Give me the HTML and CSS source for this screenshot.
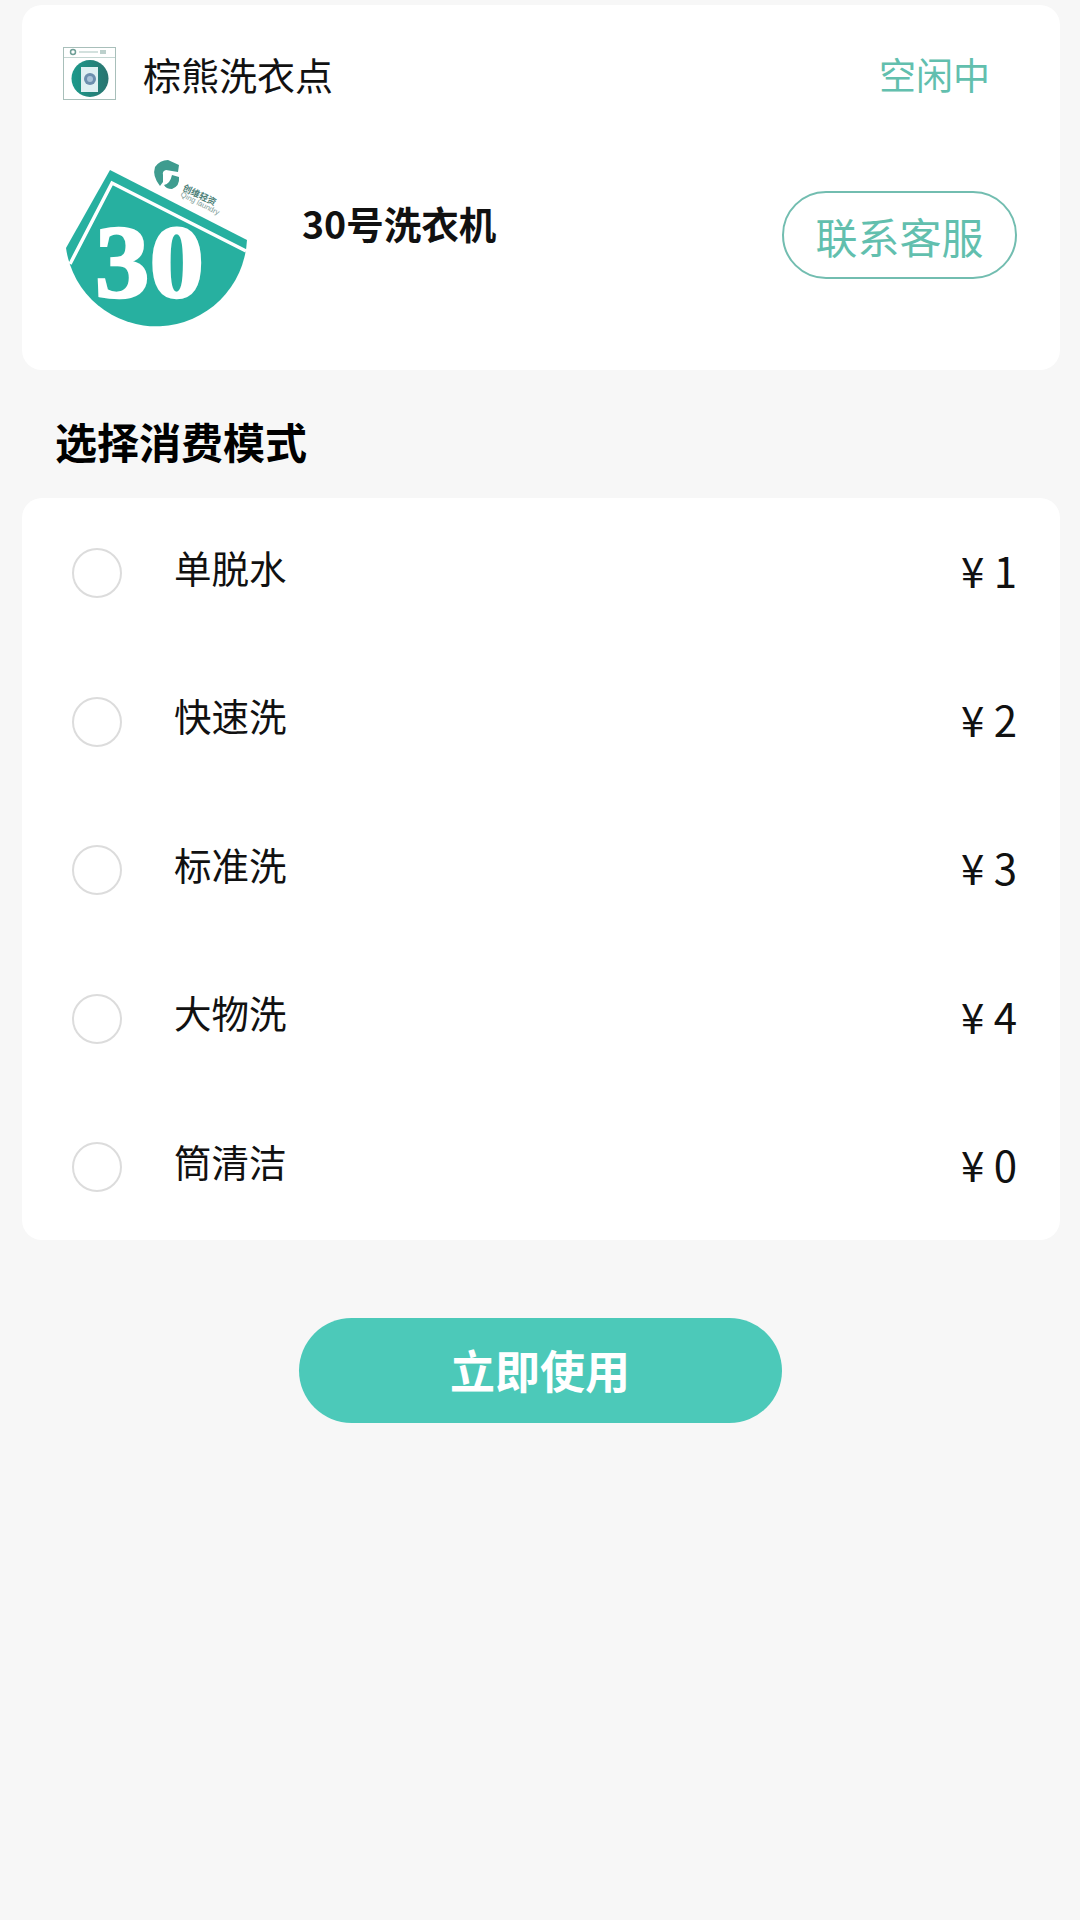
FILE: index.html
```html
<!DOCTYPE html>
<html lang="zh-CN">
<head>
    <meta charset="UTF-8">
    <meta name="viewport" content="width=device-width, initial-scale=1.0">
    <title>选择消费模式</title>
    <link rel="stylesheet" href="styles.css">
</head>
<body>
    <section class="card machine-card">
        <div class="shop-row">
            <svg class="shop-logo" viewBox="0 0 53 53">
                <defs>
                    <linearGradient id="shopDisc" x1="0" y1="0" x2="1" y2="0">
                        <stop offset="0" stop-color="#1c9a8b"/>
                        <stop offset="1" stop-color="#2a7470"/>
                    </linearGradient>
                </defs>
                <rect x="0.5" y="0.5" width="52" height="52" fill="#fff" stroke="#a8bfba"/>
                <line x1="1" y1="10.5" x2="52" y2="10.5" stroke="#c4d6d2"/>
                <circle cx="10" cy="5" r="2.5" fill="none" stroke="#6f9f97" stroke-width="1.5"/>
                <rect x="16" y="4" width="19" height="2" fill="#d3e1de"/>
                <rect x="37" y="3" width="6" height="4" fill="#bcd0cc"/>
                <circle cx="27" cy="31.5" r="18.5" fill="url(#shopDisc)"/>
                <rect x="18" y="20" width="17" height="25" fill="#dff0f2"/>
                <circle cx="27" cy="32" r="6" fill="#6d8fae"/>
                <circle cx="27" cy="32" r="3" fill="#a9c3d8"/>
            </svg>
            <span class="shop-name">棕熊洗衣点</span>
            <span class="shop-status">空闲中</span>
        </div>
        <div class="machine-row">
            <svg class="machine-badge" viewBox="0 0 200 175">
                <!-- folded tag: straight top edges, round bottom -->
                <path class="badge-fill" d="M50 10 L187 80 A91 91 0 0 1 6 88 Z"/>
                <path class="badge-line" d="M10 104 L52 23 L186 91"/>
                <text class="badge-number" x="35" y="137" textLength="109" lengthAdjust="spacingAndGlyphs">30</text>
                <path class="badge-mark" d="M95 7 Q100 0 108 0 L119 5 L118 12 L106 10 Q102 11 103 15 L103 22 L100 26 Q92 16 95 7 Z"/>
                <path class="badge-mark" d="M104 25 Q110 24 112 15 L119 17 Q120 26 112 29 Q106 29 104 25 Z"/>
                <text class="badge-brand" transform="translate(122 30) rotate(26)">创维轻资</text>
                <text class="badge-brand-en" transform="translate(120 36) rotate(27)">Qing laundry</text>
            </svg>
            <div class="machine-name">30号洗衣机</div>
            <button class="contact-btn">联系客服</button>
        </div>
    </section>

    <h2 class="section-title">选择消费模式</h2>

    <section class="card mode-card">
        <div class="mode-row">
            <span class="radio"></span>
            <span class="mode-name">单脱水</span>
            <span class="mode-price">¥ 1</span>
        </div>
        <div class="mode-row">
            <span class="radio"></span>
            <span class="mode-name">快速洗</span>
            <span class="mode-price">¥ 2</span>
        </div>
        <div class="mode-row">
            <span class="radio"></span>
            <span class="mode-name">标准洗</span>
            <span class="mode-price">¥ 3</span>
        </div>
        <div class="mode-row">
            <span class="radio"></span>
            <span class="mode-name">大物洗</span>
            <span class="mode-price">¥ 4</span>
        </div>
        <div class="mode-row">
            <span class="radio"></span>
            <span class="mode-name">筒清洁</span>
            <span class="mode-price">¥ 0</span>
        </div>
    </section>

    <div class="actions">
        <button class="use-btn">立即使用</button>
    </div>
</body>
</html>
```

FILE: styles.css
```css
html, body {
    height: 100%;
}
body {
    margin: 0;
    padding: 5px 20px 0 22px;
    box-sizing: border-box;
    background-color: #f7f7f7;
    font-family: "Noto Sans CJK SC", "Noto Sans", sans-serif;
    color: #111;
}
.card {
    background-color: #fff;
    border-radius: 20px;
}
.machine-card {
    height: 365px;
    padding: 42px 43px 0 41px;
    box-sizing: border-box;
}
.shop-row {
    display: flex;
    align-items: center;
    height: 53px;
}
.shop-logo {
    width: 53px;
    height: 53px;
    margin-right: 27px;
}
.shop-name {
    font-size: 38px;
}
.shop-status {
    margin-left: auto;
    margin-right: 27px;
    font-size: 37px;
    color: #62bfae;
}
.machine-row {
    display: flex;
    align-items: flex-start;
    margin-top: 60px;
}
.machine-badge {
    width: 200px;
    height: 175px;
    margin: 0 0 0 -3px;
}
.machine-name {
    margin: 36px 0 0 42px;
    font-size: 37.5px;
    font-weight: 700;
    line-height: 54px;
}
.contact-btn {
    width: 235px;
    height: 88px;
    margin: 31px 0 0 auto;
    padding: 0;
    background-color: #fff;
    border: 2px solid #72bdb0;
    border-radius: 44px;
    font-family: inherit;
    font-size: 42px;
    color: #62bfae;
}
.badge-fill {
    fill: #27b0a0;
}
.badge-line {
    fill: none;
    stroke: #fff;
    stroke-width: 3.5;
}
.badge-number {
    font-family: "Liberation Serif", serif;
    font-size: 104px;
    font-weight: 700;
    fill: #fff;
    stroke: #fff;
    stroke-width: 2.5;
}
.badge-mark {
    fill: #3f9c8f;
}
.badge-brand {
    font-size: 9px;
    font-weight: 700;
    fill: #4d7f78;
}
.badge-brand-en {
    font-family: "Liberation Sans", sans-serif;
    font-size: 7.5px;
    fill: #7d9c97;
}
.section-title {
    margin: 41px 0 0 33px;
    font-size: 42px;
    font-weight: 700;
    line-height: 60px;
    color: #000;
}
.mode-card {
    margin-top: 27px;
    padding: 1px 0 0;
    height: 742px;
    box-sizing: border-box;
}
.mode-row {
    display: flex;
    align-items: center;
    height: 148.5px;
    padding: 0 43px 0 50px;
}
.radio {
    width: 46px;
    height: 46px;
    border: 2px solid #dcdcdc;
    border-radius: 50%;
    background-color: #fff;
}
.mode-name {
    margin: -14px 0 0 52px;
    font-size: 37.5px;
}
.mode-price {
    margin: -7px 0 0 auto;
    font-size: 42px;
}
.actions {
    display: flex;
    justify-content: center;
    margin-top: 78px;
    padding-right: 2px;
}
.use-btn {
    width: 483px;
    height: 105px;
    padding: 0 0 2px;
    background-color: #4cc9b9;
    border: none;
    border-radius: 53px;
    font-family: inherit;
    font-size: 45px;
    font-weight: 700;
    color: #fff;
}
```
